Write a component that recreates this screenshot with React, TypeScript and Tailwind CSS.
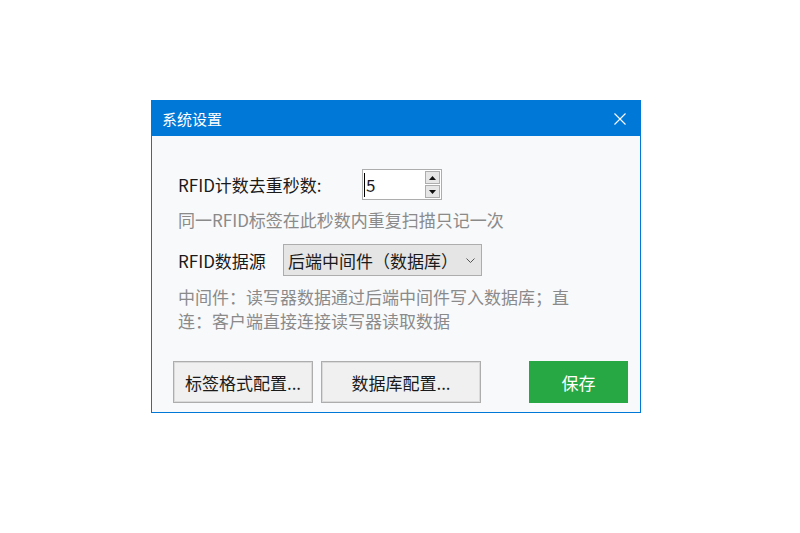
import React from "react";

const font = { fontFamily: '"Noto Sans CJK SC", "Noto Sans", sans-serif' };

export default function App() {
  return (
    <div className="w-[800px] h-[533px] bg-white pt-[100px] pl-[151px]" style={font}>
      <div className="w-[490px] h-[313px] border border-[#0078d7] flex flex-col bg-[#f8f9fb]">
        {/* title bar */}
        <div className="h-[35px] bg-[#0078d7] flex items-center pl-[10px] pr-[14px] text-white">
          <span className="text-[15px] leading-none">系统设置</span>
          <div className="flex-1" />
          <svg width="12" height="12" viewBox="0 0 12 12" className="mt-[1px]">
            <path d="M0.5 0.5 L11.5 11.5 M11.5 0.5 L0.5 11.5" stroke="white" strokeWidth="1.1" fill="none" />
          </svg>
        </div>
        {/* body */}
        <div className="flex-1 flex flex-col pl-[26px] pr-[12px] pb-[9px] text-[17px] text-[#1a1a1a]">
          <div className="flex items-center mt-[33px] h-[31px]">
            <div className="w-[184px] leading-none">RFID计数去重秒数:</div>
            <div className="w-[80px] h-[31px] border border-[#adadad] bg-white flex">
              <div className="flex-1 flex items-center pl-[1px]">
                <span className="w-[1px] h-[24px] bg-black" />
                <span className="leading-none ml-[1px]">5</span>
              </div>
              <div className="w-[15px] flex flex-col gap-[1px] py-[1px] mr-[1px]">
                <div className="flex-1 border border-[#adadad] bg-[#e6e6e6] flex items-center justify-center">
                  <svg width="7" height="4" viewBox="0 0 7 4"><path d="M3.5 0 L7 4 L0 4 Z" fill="#111" /></svg>
                </div>
                <div className="flex-1 border border-[#adadad] bg-[#e6e6e6] flex items-center justify-center">
                  <svg width="7" height="4" viewBox="0 0 7 4"><path d="M0 0 L7 0 L3.5 4 Z" fill="#111" /></svg>
                </div>
              </div>
            </div>
          </div>
          <div className="mt-[8px] leading-[24px] text-[#8a8a8a]">同一RFID标签在此秒数内重复扫描只记一次</div>
          <div className="flex items-center mt-[12px] h-[32px]">
            <div className="w-[105px] leading-none">RFID数据源</div>
            <div className="w-[199px] h-[32px] border border-[#adadad] bg-[#e5e5e5] flex items-center pl-[4px] pr-[6px]">
              <span className="leading-none">后端中间件（数据库）</span>
              <div className="flex-1" />
              <svg width="9" height="5" viewBox="0 0 9 5">
                <path d="M0.5 0.5 L4.5 4.5 L8.5 0.5" stroke="#555" strokeWidth="1" fill="none" />
              </svg>
            </div>
          </div>
          <div className="mt-[9px] w-[400px] leading-[24px] text-[#8a8a8a]">
            中间件：读写器数据通过后端中间件写入数据库；直连：客户端直接连接读写器读取数据
          </div>
          <div className="flex-1" />
          <div className="flex items-center -ml-[5px]">
            <button className="w-[140px] h-[42px] border border-[#adadad] shadow-[inset_0_0_0_1px_#dadada] bg-[#f0f0f0] text-[17px] text-[#1a1a1a] flex items-center justify-center leading-none">
              标签格式配置...
            </button>
            <button className="ml-[8px] w-[160px] h-[42px] border border-[#adadad] shadow-[inset_0_0_0_1px_#dadada] bg-[#f0f0f0] text-[17px] text-[#1a1a1a] flex items-center justify-center leading-none">
              数据库配置...
            </button>
            <div className="flex-1" />
            <button className="w-[99px] h-[42px] bg-[#28a745] text-white text-[17px] flex items-center justify-center leading-none">
              保存
            </button>
          </div>
        </div>
      </div>
    </div>
  );
}
